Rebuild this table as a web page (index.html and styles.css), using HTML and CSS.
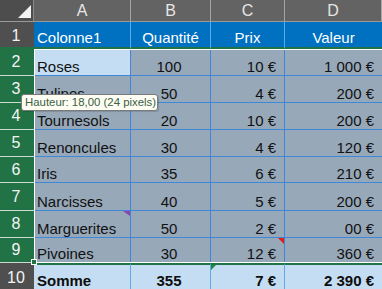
FILE: index.html
```html
<!DOCTYPE html>
<html lang="fr">
<head>
<meta charset="utf-8">
<title>Feuille</title>
<link rel="stylesheet" href="styles.css">
</head>
<body>
<div class="sheet">
  <div class="corner"><span class="corner-tri"></span></div>
  <div class="ch">A</div>
  <div class="ch">B</div>
  <div class="ch">C</div>
  <div class="ch last">D</div>

  <div class="rh dark r1">1</div>
  <div class="c head left">Colonne1</div>
  <div class="c head center">Quantité</div>
  <div class="c head center">Prix</div>
  <div class="c head center last">Valeur</div>

  <div class="rh green">2</div>
  <div class="c d left active">Roses</div>
  <div class="c d center">100</div>
  <div class="c d right">10 €</div>
  <div class="c d right last">1 000 €</div>

  <div class="rh green">3</div>
  <div class="c d left">Tulipes</div>
  <div class="c d center">50</div>
  <div class="c d right">4 €</div>
  <div class="c d right last">200 €</div>

  <div class="rh green">4</div>
  <div class="c d left">Tournesols</div>
  <div class="c d center">20</div>
  <div class="c d right">10 €</div>
  <div class="c d right last">200 €</div>

  <div class="rh green">5</div>
  <div class="c d left">Renoncules</div>
  <div class="c d center">30</div>
  <div class="c d right">4 €</div>
  <div class="c d right last">120 €</div>

  <div class="rh green">6</div>
  <div class="c d left">Iris</div>
  <div class="c d center">35</div>
  <div class="c d right">6 €</div>
  <div class="c d right last">210 €</div>

  <div class="rh green">7</div>
  <div class="c d left">Narcisses</div>
  <div class="c d center">40</div>
  <div class="c d right">5 €</div>
  <div class="c d right last">200 €</div>

  <div class="rh green">8</div>
  <div class="c d left">Marguerites<span class="flag flag-purple"></span></div>
  <div class="c d center">50</div>
  <div class="c d right">2 €</div>
  <div class="c d right last">00 €</div>

  <div class="rh green">9</div>
  <div class="c d left">Pivoines</div>
  <div class="c d center">30</div>
  <div class="c d right">12 €<span class="flag flag-red"></span></div>
  <div class="c d right last">360 €</div>

  <div class="rh dark r10">10</div>
  <div class="c tot left">Somme</div>
  <div class="c tot center">355</div>
  <div class="c tot right">7 €<span class="flag flag-green"></span></div>
  <div class="c tot right last">2 390 €</div>

  <div class="selection"></div>
  <div class="handle"></div>
  <div class="tooltip">Hauteur: 18,00 (24 pixels)</div>
</div>
</body>
</html>
```

FILE: styles.css
```css
html, body {
  margin: 0;
  padding: 0;
  background: #97a8b9;
  overflow: hidden;
}

.sheet {
  position: relative;
  display: grid;
  grid-template-columns: 34px 97px 80px 74px 97px;
  grid-template-rows: 22px 27px 27px 27px 27px 27px 26px 28px 27px 25px 26px;
  width: 382px;
  height: 289px;
  overflow: hidden;
  font-family: "Liberation Sans", Arial, sans-serif;
}

.sheet > div {
  box-sizing: border-box;
}

/* column headers */
.corner {
  position: relative;
  background: #4d4d4d;
  border-right: 1px solid #8a8a8a;
  border-bottom: 1px solid #9a9a9a;
}

.corner-tri {
  position: absolute;
  right: 2px;
  bottom: 3px;
  width: 0;
  height: 0;
  border-left: 13px solid transparent;
  border-bottom: 13px solid #f2f2f2;
}

.ch {
  display: flex;
  align-items: center;
  justify-content: center;
  background: #636363;
  color: #e6e6e6;
  font-size: 16px;
  line-height: 16px;
  padding-top: 1px;
  border-right: 1px solid #a4a4a4;
  border-bottom: 1px solid #9a9a9a;
}

/* row headers */
.rh {
  display: flex;
  align-items: center;
  justify-content: center;
  color: #f4f4f4;
  font-size: 16px;
  line-height: 16px;
  padding-right: 2px;
}

.rh.green {
  background: #217346;
  border-bottom: 1px solid #c9dccf;
}

.rh.dark {
  background: #4f4f4f;
}

.rh.r1 {
  border-bottom: 2px solid #217346;
  padding-top: 3px;
}

.rh.r10 {
  padding-top: 3px;
}

/* cells */
.c {
  position: relative;
  display: flex;
  align-items: flex-end;
  font-size: 15px;
  line-height: 17px;
  white-space: nowrap;
  border-right: 1px solid #3f87d8;
}

.c.last {
  border-right: none;
}

.left {
  justify-content: flex-start;
  padding-left: 3px;
}

.center {
  justify-content: center;
  padding-right: 3px;
}

.head.center {
  padding-right: 0;
}

.right {
  justify-content: flex-end;
  padding-right: 8px;
}

.head {
  background: #0070c0;
  color: #ffffff;
  border-right-color: #5ea8ec;
  border-bottom: 2px solid #217346;
  padding-bottom: 1px;
}

.d {
  background: #97a8b9;
  color: #111111;
  border-bottom: 1px solid #3f87d8;
}

.d.active {
  background: #c5ddf2;
}

.tot {
  background: #c5ddf2;
  color: #0d0d0d;
  font-weight: bold;
  border-top: 2px solid #217346;
  border-right-color: #5ea8ec;
}

/* small corner indicators */
.flag {
  position: absolute;
  top: 0;
  width: 0;
  height: 0;
}

.flag-purple {
  right: 0;
  border-left: 7px solid transparent;
  border-top: 5px solid #8e44ad;
}

.flag-red {
  right: 0;
  border-left: 6px solid transparent;
  border-top: 6px solid #e21b1b;
}

.flag-green {
  left: 0;
  border-right: 5px solid transparent;
  border-top: 5px solid #1e8a3c;
}

/* overlays */
.selection {
  position: absolute;
  left: 34px;
  top: 49px;
  width: 360px;
  height: 214px;
  border: 1px solid #ffffff;
  border-right: none;
  box-sizing: border-box;
  pointer-events: none;
}

.handle {
  position: absolute;
  left: 31px;
  top: 259px;
  width: 6px;
  height: 6px;
  background: #217346;
  border: 1px solid #ffffff;
  box-sizing: border-box;
}

.tooltip {
  position: absolute;
  left: 21px;
  top: 94px;
  width: 137px;
  height: 17px;
  box-sizing: border-box;
  background: #fdfdf3;
  border: 1px solid #7a7a7a;
  border-radius: 3px;
  color: #3a5f44;
  font-family: "Liberation Sans", Arial, sans-serif;
  font-size: 11.4px;
  line-height: 15px;
  padding-left: 3px;
  white-space: nowrap;
  box-shadow: 1px 1px 1px rgba(0,0,0,0.15);
}
```
